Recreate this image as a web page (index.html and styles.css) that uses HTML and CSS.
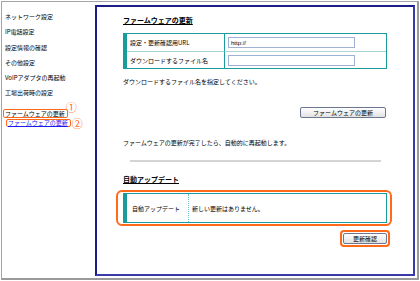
FILE: index.html
```html
<!DOCTYPE html>
<html lang="ja">
<head>
    <meta charset="UTF-8">
    <meta name="viewport" content="width=device-width, initial-scale=1.0">
    <title>ファームウェアの更新</title>
    <link rel="stylesheet" href="styles.css">
</head>
<body>

<div class="frame">

    <!-- Side menu -->
    <nav class="side-menu">
        <ul>
            <li><a href="#">ネットワーク設定</a></li>
            <li><a href="#">IP電話設定</a></li>
            <li><a href="#">設定情報の確認</a></li>
            <li><a href="#">その他設定</a></li>
            <li><a href="#">VoIPアダプタの再起動</a></li>
            <li><a href="#">工場出荷時の設定</a></li>
            <li class="active"><span class="mark"><a href="#">ファームウェアの更新</a></span><span class="num num-1">①</span></li>
            <li class="sub"><span class="mark"><a href="#">ファームウェアの更新</a></span><span class="num">②</span></li>
        </ul>
    </nav>

    <!-- Main panel -->
    <div class="panel">
        <h2 class="title">ファームウェアの更新</h2>

        <div class="form-table">
            <div class="label first">設定・更新確認用URL</div>
            <div class="value first"><input type="text" value="http://"></div>
            <div class="label">ダウンロードするファイル名</div>
            <div class="value"><input type="text" value=""></div>
        </div>

        <p class="note">ダウンロードするファイル名を指定してください。</p>

        <div class="btn-row">
            <button class="btn btn-wide">ファームウェアの更新</button>
        </div>

        <p class="note note-restart">ファームウェアの更新が完了したら、自動的に再起動します。</p>

        <hr class="sep">

        <h2 class="title title-auto">自動アップデート</h2>

        <div class="highlight">
            <div class="form-table auto-table">
                <div class="label">自動アップデート</div>
                <div class="value">新しい更新はありません。</div>
            </div>
        </div>

        <div class="btn-row">
            <span class="btn-mark"><button class="btn btn-small">更新確認</button></span>
        </div>
    </div>

</div>

</body>
</html>
```

FILE: styles.css
```css
* {
    box-sizing: border-box;
}
body {
    margin: 0;
    padding: 0;
    background-color: #fff;
    font-family: "Noto Sans CJK JP", "Liberation Sans", sans-serif;
    font-size: 6px;
    color: #000;
}
.frame {
    display: flex;
    margin: 1px 0 0 1px;
    width: 418px;
    height: 279px;
    border: 1px solid #a4a4a4;
    border-right: 2px solid #9a9a9a;
    border-bottom: 2px solid #9a9a9a;
}

/* side menu */
.side-menu {
    width: 93px;
    flex-shrink: 0;
}
.side-menu ul {
    list-style: none;
    margin: 0;
    padding: 7px 0 0 3px;
}
.side-menu li {
    line-height: 15.3px;
    white-space: nowrap;
}
.side-menu a {
    color: #000;
    text-decoration: none;
}
.side-menu li.active {
    line-height: 7px;
    margin-top: 2px;
}
.side-menu li.sub {
    line-height: 6px;
    margin-top: 1px;
    padding-left: 3px;
}
.side-menu li.sub a {
    color: #1a1aee;
    text-decoration: underline;
}
.mark {
    display: inline-block;
    margin-left: -2px;
    padding: 0 2px 0 1px;
    border: 1.5px solid #ff6a1a;
    border-radius: 2px;
    vertical-align: middle;
}
.num {
    display: inline-block;
    color: #ff6a1a;
    font-size: 11px;
    line-height: 9px;
    margin-left: 1px;
    vertical-align: middle;
}
.num-1 {
    margin-left: -2px;
    vertical-align: 3px;
}

/* main panel */
.panel {
    width: 320px;
    height: 271px;
    margin-top: 3px;
    border: 2px solid #3a3aa8;
    border-top-color: #1c1c88;
    border-left-color: #1c1c88;
    padding: 0 26px 0 26px;
}
.title {
    margin: 8px 0 0;
    font-size: 7px;
    line-height: 10px;
    font-weight: bold;
    text-decoration: underline;
}
.form-table {
    display: grid;
    grid-template-columns: 98px 1fr;
    grid-template-rows: 18px 16px;
    margin-top: 8px;
    border: 1px solid #1a9c9c;
    border-left: 4px solid #1a9c9c;
}
.form-table .label {
    display: flex;
    align-items: center;
    padding-left: 3px;
    border-right: 1px solid #1a9c9c;
}
.form-table .value {
    display: flex;
    align-items: center;
    padding-left: 3px;
}
.form-table .first {
    border-bottom: 1px solid #a8d4d4;
}
.form-table input {
    width: 127px;
    height: 11px;
    padding: 0 2px;
    border: 1px solid #a0b2d4;
    font-family: "Liberation Sans", sans-serif;
    font-size: 6px;
    outline: none;
}
.note {
    margin: 8px 0 0;
    line-height: 10px;
}
.note-restart {
    margin-top: 20px;
}
.btn-row {
    display: flex;
    justify-content: flex-end;
    margin-top: 20px;
}
.btn {
    height: 11px;
    padding: 0;
    border: 1px solid #6c7690;
    border-radius: 2px;
    background: linear-gradient(#ffffff, #e2e2e2);
    font-family: "Noto Sans CJK JP", sans-serif;
    font-size: 6px;
    line-height: 9px;
    color: #000;
}
.btn-wide {
    width: 86px;
    margin-right: 1px;
}
.btn-small {
    width: 44px;
    display: block;
}
.sep {
    margin: 12px 6px 0 7px;
    height: 2px;
    border: none;
    background-color: #d4d4d4;
}
.title-auto {
    margin-top: 12px;
}
.highlight {
    margin: 6px -5px 0 -7px;
    padding: 1px 3px 1px 5px;
    border: 2px solid #ff6a1a;
    border-radius: 6px;
}
.auto-table {
    grid-template-columns: 62px 1fr;
    grid-template-rows: 28px;
    margin-top: 0;
}
.auto-table .label {
    padding-left: 5px;
    border-right: 1px dotted #6cc0c0;
}
.btn-row:last-child {
    margin-top: 4px;
    margin-right: -3px;
}
.btn-mark {
    display: block;
    padding: 1px;
    border: 2px solid #ff6a1a;
    border-radius: 4px;
}
```
